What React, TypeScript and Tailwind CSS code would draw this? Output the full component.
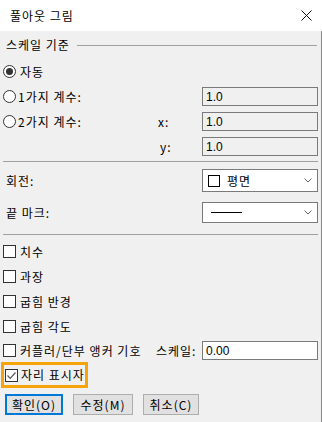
const font = { fontFamily: '"Noto Sans CJK KR", "Noto Sans", sans-serif' };

function Radio({ checked }: { checked?: boolean }) {
    return (
        <span className="w-[13px] h-[13px] rounded-full border border-[#333] bg-white flex items-center justify-center shrink-0">
            {checked && <span className="w-[7px] h-[7px] rounded-full bg-[#333]" />}
        </span>
    );
}

function Check({ checked }: { checked?: boolean }) {
    return (
        <span className="w-[13px] h-[13px] border border-[#333] bg-white flex items-center justify-center shrink-0">
            {checked && (
                <svg width="11" height="11" viewBox="0 0 11 11">
                    <path d="M1.5 5.5 L4.2 8.3 L9.5 2.5" fill="none" stroke="#555" strokeWidth="1.2" />
                </svg>
            )}
        </span>
    );
}

function Field({ value, white }: { value: string; white?: boolean }) {
    return (
        <div className={`w-[116px] h-[19px] border border-[#7a7a7a] flex items-center pl-[3px] text-[12px] tracking-normal text-black ${white ? "bg-white" : "bg-[#f0f0f0]"}`}
            style={{ fontFamily: '"Liberation Sans", sans-serif' }}>
            {value}
        </div>
    );
}

function Chevron() {
    return (
        <svg width="8" height="5" viewBox="0 0 8 5" className="mr-[5px]">
            <path d="M0.5 0.5 L4 4 L7.5 0.5" fill="none" stroke="#666" strokeWidth="1" />
        </svg>
    );
}

function CheckRow({ label }: { label: string }) {
    return (
        <div className="h-[25px] flex items-center gap-[4px]">
            <Check />
            <span>{label}</span>
        </div>
    );
}

export default function App() {
    return (
        <div className="w-[322px] h-[422px] bg-[#f0f0f0] overflow-hidden text-[12px] leading-none tracking-[1px] text-black" style={font}>
            <div className="h-[31px] bg-white flex items-center justify-between pl-[10px] pr-[10px]">
                <span className="text-[12px]">풀아웃 그림</span>
                <svg width="11" height="11" viewBox="0 0 11 11">
                    <path d="M0.5 0.5 L10.5 10.5 M10.5 0.5 L0.5 10.5" stroke="#111" strokeWidth="1" />
                </svg>
            </div>
            <div className="h-[391px] border-r border-[#888] px-[3px] flex flex-col">
                <div className="h-[28px] flex items-center gap-[7px] pl-[3px]">
                    <span>스케일 기준</span>
                    <div className="flex-1 border-t border-[#a0a0a0] mr-[1px]" />
                </div>
                <div className="h-[25px] flex items-center gap-[4px]">
                    <Radio checked />
                    <span>자동</span>
                </div>
                <div className="h-[25px] flex items-center">
                    <Radio />
                    <span className="ml-[2px] flex-1">1가지 계수:</span>
                    <Field value="1.0" />
                </div>
                <div className="h-[25px] flex items-center">
                    <Radio />
                    <span className="ml-[2px] w-[140px]">2가지 계수:</span>
                    <span className="flex-1">x:</span>
                    <Field value="1.0" />
                </div>
                <div className="h-[25px] flex items-center">
                    <span className="ml-[157px] flex-1">y:</span>
                    <Field value="1.0" />
                </div>
                <div className="mt-[2px] border-t border-[#a0a0a0]" />

                <div className="pt-[7px] flex flex-col gap-[10px]">
                    <div className="h-[23px] flex items-center">
                        <span className="flex-1 pl-[3px]">회전:</span>
                        <div className="w-[116px] h-[23px] border border-[#7a7a7a] bg-white flex items-center justify-between">
                            <div className="flex items-center">
                                <span className="ml-[5px] w-[12px] h-[12px] border border-black" />
                                <span className="ml-[7px]">평면</span>
                            </div>
                            <Chevron />
                        </div>
                    </div>
                    <div className="h-[21px] flex items-center">
                        <span className="flex-1 pl-[3px]">끝 마크:</span>
                        <div className="w-[116px] h-[21px] border border-[#7a7a7a] bg-white flex items-center justify-between">
                            <span className="ml-[8px] w-[31px] border-t border-black" />
                            <Chevron />
                        </div>
                    </div>
                </div>
                <div className="mt-[11px] border-t border-[#a0a0a0]" />

                <div className="pt-[4px] flex flex-col">
                    <CheckRow label="치수" />
                    <CheckRow label="과장" />
                    <CheckRow label="굽힘 반경" />
                    <CheckRow label="굽힘 각도" />
                    <div className="h-[23px] flex items-center">
                        <Check />
                        <span className="ml-[4px] w-[136px]">커플러/단부 앵커 기호</span>
                        <span className="flex-1">스케일:</span>
                        <Field value="0.00" white />
                    </div>
                    <div className="h-[26px] w-[87px] -ml-[2px] border-[3px] border-[#f5a40a] flex items-center gap-[3px] pl-[1px]">
                        <Check checked />
                        <span>자리 표시자</span>
                    </div>
                </div>

                <div className="mt-[6px] flex gap-[10px] pl-[2px]">
                    <button className="w-[58px] h-[21px] border-2 border-[#0078d7] bg-[#e1e1e1] text-[12px] leading-none tracking-[1px]">확인(O)</button>
                    <button className="w-[60px] h-[21px] border border-[#adadad] bg-[#e1e1e1] text-[12px] leading-none tracking-[1px]">수정(M)</button>
                    <button className="w-[56px] h-[21px] border border-[#adadad] bg-[#e1e1e1] text-[12px] leading-none tracking-[1px]">취소(C)</button>
                </div>
            </div>
        </div>
    );
}
